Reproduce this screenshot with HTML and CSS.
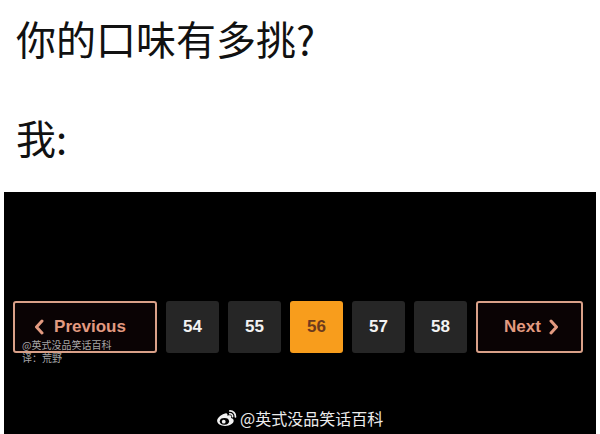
FILE: index.html
```html
<!DOCTYPE html>
<html lang="zh-CN">
<head>
<meta charset="utf-8">
<link rel="stylesheet" href="styles.css">
</head>
<body>
<div class="captions">
  <p class="line line-q">你的口味有多挑?</p>
  <p class="line line-me">我:</p>
</div>
<div class="panel">
  <nav class="pager">
    <a class="nav-btn prev">
      <svg class="chev" width="10" height="16" viewBox="0 0 10 16"><polyline points="8,2 2.5,8 8,14" fill="none" stroke="currentColor" stroke-width="3" stroke-linejoin="round" stroke-linecap="round"/></svg>
      <span>Previous</span>
    </a>
    <a class="page">54</a>
    <a class="page">55</a>
    <a class="page current">56</a>
    <a class="page">57</a>
    <a class="page">58</a>
    <a class="nav-btn next">
      <span>Next</span>
      <svg class="chev" width="10" height="16" viewBox="0 0 10 16"><polyline points="2,2 7.5,8 2,14" fill="none" stroke="currentColor" stroke-width="3" stroke-linejoin="round" stroke-linecap="round"/></svg>
    </a>
  </nav>
  <p class="mark-small">@英式没品笑话百科<br>译：荒野</p>
  <div class="mark-weibo">
    <svg class="weibo" width="21" height="18" viewBox="0 0 19 16">
      <path d="M7.5 4.2C4.2 5.3 1 8 1 10.6 1 13.4 4.3 15.2 8.2 15.2c4.4 0 7.8-2.4 7.8-4.7 0-1.6-1.5-2.2-2.4-2.4.5-1.2.3-2.3-1-2.5-1 -.1-2.3.5-2.3.5s.6-1.6-.6-2.2C8.9 3.6 8.2 3.9 7.5 4.2z" fill="#f2f2f2"/>
      <ellipse cx="7.6" cy="11" rx="4.2" ry="3.1" fill="#000"/>
      <circle cx="7" cy="11.3" r="1.7" fill="#f2f2f2"/>
      <path d="M12.6 1.6a5 5 0 0 1 5 5.4" fill="none" stroke="#f2f2f2" stroke-width="1.6" stroke-linecap="round"/>
      <path d="M12.4 4.2a2.3 2.3 0 0 1 2.6 2.6" fill="none" stroke="#f2f2f2" stroke-width="1.4" stroke-linecap="round"/>
    </svg>
    <span>@英式没品笑话百科</span>
  </div>
</div>
</body>
</html>
```
FILE: styles.css
```css
html, body {
  margin: 0;
  padding: 0;
  background: #ffffff;
}
body {
  width: 600px;
  height: 434px;
  overflow: hidden;
  font-family: "Noto Sans CJK SC", "Noto Sans", sans-serif;
}
.captions {
  padding: 18px 0 0 16px;
  height: 192px;
  box-sizing: border-box;
}
.line {
  margin: 0;
  font-size: 40px;
  line-height: 40px;
  color: #111;
  font-weight: 400;
}
.line-me {
  margin-top: 59px;
}
.panel {
  position: relative;
  margin: 0 4px;
  height: 242px;
  background: #000;
  padding: 109px 0 0 9px;
  box-sizing: border-box;
}
.pager {
  display: flex;
  gap: 9px;
  align-items: stretch;
  height: 52px;
}
.pager a {
  display: flex;
  align-items: center;
  justify-content: center;
  box-sizing: border-box;
  font-family: "Liberation Sans", Arial, sans-serif;
  font-weight: 700;
  font-size: 17px;
  border-radius: 3px;
}
.nav-btn {
  border: 2px solid #d9a088;
  background: #0a0304;
  color: #e39a80;
  gap: 10px;
}
.prev { width: 144px; padding-right: 10px; }
.next { width: 107px; gap: 8px; padding-left: 4px; }
.chev { display: block; }
.page {
  width: 53px;
  background: #262626;
  color: #f2f2f2;
}
.page.current {
  background: #f89d1c;
  color: #6e3a1c;
}
.mark-small {
  position: absolute;
  left: 18px;
  top: 146px;
  margin: 0;
  font-size: 10px;
  line-height: 13px;
  color: rgba(200, 200, 200, 0.85);
  font-family: "Noto Sans CJK SC", sans-serif;
}
.mark-weibo {
  position: absolute;
  left: 212px;
  top: 216px;
  display: flex;
  align-items: center;
  gap: 3px;
  color: #ececec;
  font-size: 16px;
  line-height: 20px;
  font-family: "Noto Sans CJK SC", sans-serif;
}
.weibo { display: block; }
```
